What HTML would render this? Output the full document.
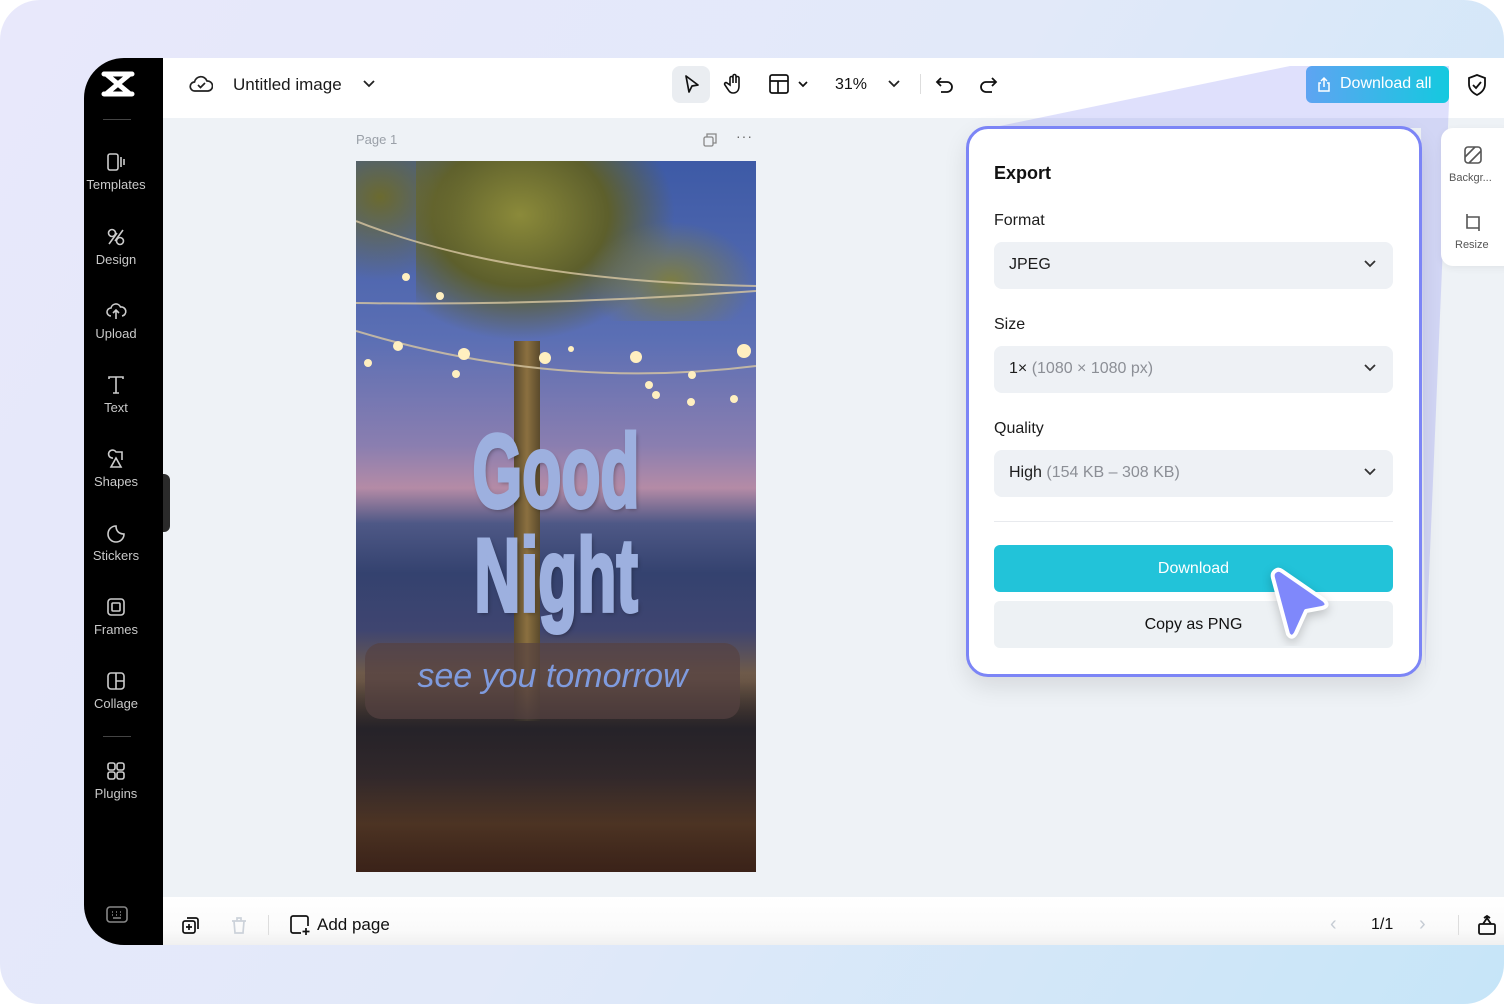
<!DOCTYPE html>
<html><head><meta charset="utf-8"><style>
*{margin:0;padding:0;box-sizing:border-box}
html,body{width:1504px;height:1004px;overflow:hidden;background:#fff;font-family:"Liberation Sans",sans-serif}
#bg{position:absolute;left:0;top:0;width:1504px;height:1004px;border-radius:40px;background:linear-gradient(120deg,#e8e8fb 0%,#e2e9f9 50%,#c6e5f8 100%);overflow:hidden}
.abs{position:absolute}
#side{left:84px;top:58px;width:79px;height:887px;background:#000;border-radius:40px 0 0 40px}
.si{position:absolute;left:0;width:64px;text-align:center;color:#c9c9c9;font-size:13px}
.si svg{display:block;margin:0 auto 4px}
#top{left:163px;top:58px;width:1341px;height:60px;background:#fff}
#canvas{left:163px;top:118px;width:1341px;height:779px;background:#eef2f6}
#bot{left:163px;top:897px;width:1341px;height:48px;background:linear-gradient(#fff,#fafafa 70%,#f0f0f0)}
.lbl{position:absolute;left:994px;font-size:16px;color:#1c1c1c}
.sel{position:absolute;left:994px;width:399px;height:47px;background:#eef1f5;border-radius:8px;font-size:16px;color:#1c1c1c;padding:14px 15px}
.sel span{color:#8c8f96}
.sel svg{position:absolute;right:16px;top:17px}
</style></head><body>
<div id="bg">
<div class="abs" id="top"></div>
<div class="abs" id="canvas"></div>
<div class="abs" id="bot"></div>
<div class="abs" id="side">
 <svg class="abs" style="left:17px;top:12px" width="34" height="28" viewBox="0 0 34 28"><path d="M3 4h28M3 24h28M5 4l24 20M29 4L5 24" stroke="#fff" stroke-width="5" fill="none" stroke-linecap="round"/></svg>
 <div class="abs" style="left:19px;top:61px;width:28px;height:1px;background:#444"></div>
 <div class="si" style="top:93px"><svg width="22" height="22" viewBox="0 0 22 22" fill="none" stroke="#ccc" stroke-width="1.6"><rect x="3" y="3" width="10" height="16" rx="2"/><path d="M16 6v10M19 8v6"/></svg>Templates</div>
 <div class="si" style="top:168px"><svg width="22" height="22" viewBox="0 0 22 22" fill="none" stroke="#ccc" stroke-width="1.6"><circle cx="7" cy="7" r="3.5"/><circle cx="15" cy="15" r="3.5"/><path d="M10 15l8-11M4 18l8-11"/></svg>Design</div>
 <div class="si" style="top:242px"><svg width="22" height="22" viewBox="0 0 22 22" fill="none" stroke="#ccc" stroke-width="1.6"><path d="M6 16a4 4 0 010-8 5 5 0 019.5-1A4 4 0 0117 16M11 19v-8M8 13l3-3 3 3"/></svg>Upload</div>
 <div class="si" style="top:316px"><svg width="22" height="22" viewBox="0 0 22 22" fill="none" stroke="#ccc" stroke-width="1.6"><path d="M4 5V3h14v2M11 3v16M8 19h6"/></svg>Text</div>
 <div class="si" style="top:390px"><svg width="22" height="22" viewBox="0 0 22 22" fill="none" stroke="#ccc" stroke-width="1.6"><path d="M8 10a4 4 0 113-6h6v8M11 10l-5 9h10z"/></svg>Shapes</div>
 <div class="si" style="top:464px"><svg width="22" height="22" viewBox="0 0 22 22" fill="none" stroke="#ccc" stroke-width="1.6"><path d="M19 12a8 8 0 11-8-8c0 5 3 8 8 8z"/></svg>Stickers</div>
 <div class="si" style="top:538px"><svg width="22" height="22" viewBox="0 0 22 22" fill="none" stroke="#ccc" stroke-width="1.6"><rect x="3" y="3" width="16" height="16" rx="3"/><rect x="7" y="7" width="8" height="8" rx="1"/></svg>Frames</div>
 <div class="si" style="top:612px"><svg width="22" height="22" viewBox="0 0 22 22" fill="none" stroke="#ccc" stroke-width="1.6"><rect x="3" y="3" width="16" height="16" rx="3"/><path d="M11 3v16M11 11h8"/></svg>Collage</div>
 <div class="abs" style="left:19px;top:678px;width:28px;height:1px;background:#444"></div>
 <div class="si" style="top:702px"><svg width="22" height="22" viewBox="0 0 22 22" fill="none" stroke="#ccc" stroke-width="1.6"><rect x="3" y="3" width="7" height="7" rx="2"/><rect x="12" y="3" width="7" height="7" rx="2"/><rect x="3" y="12" width="7" height="7" rx="2"/><rect x="12" y="12" width="7" height="7" rx="2"/></svg>Plugins</div>
 <svg class="abs" style="left:22px;top:848px" width="22" height="18" viewBox="0 0 22 18" fill="none" stroke="#888" stroke-width="1.6"><rect x="1" y="1" width="20" height="15" rx="3"/><path d="M6 6h1M10 6h1M14 6h1M6 9h1M10 9h1M14 9h1M7 12h8"/></svg>
</div>
<div class="abs" style="left:163px;top:474px;width:7px;height:58px;background:#2a2a2a;border-radius:0 6px 6px 0"></div>
<!-- top bar content -->
<svg class="abs" style="left:189px;top:73px" width="24" height="22" viewBox="0 0 24 22" fill="none" stroke="#222" stroke-width="1.7"><path d="M6 18a4.5 4.5 0 01-.5-9A6.5 6.5 0 0118 8a5 5 0 011 10z"/><path d="M9 12l2.5 2.5L16 10"/></svg>
<div class="abs" style="left:233px;top:75px;font-size:17px;color:#1a1a1a">Untitled image</div>
<svg class="abs" style="left:362px;top:79px" width="14" height="10" viewBox="0 0 14 10"><path d="M2 2l5 5 5-5" stroke="#222" stroke-width="1.8" fill="none"/></svg>
<div class="abs" style="left:672px;top:66px;width:38px;height:37px;background:#eaedf1;border-radius:8px"></div>
<svg class="abs" style="left:680px;top:73px" width="22" height="22" viewBox="0 0 22 22"><path d="M6 3l12 9-6 1-3 6z" stroke="#111" stroke-width="1.7" fill="none" stroke-linejoin="round"/></svg>
<svg class="abs" style="left:722px;top:72px" width="24" height="24" viewBox="0 0 24 24" fill="none" stroke="#111" stroke-width="1.6"><path d="M8 13V6a1.5 1.5 0 013 0v5V4a1.5 1.5 0 013 0v7V6a1.5 1.5 0 013 0v8c0 4-2 7-6 7-3 0-4-2-6-5l-2-3a1.4 1.4 0 012-2z"/></svg>
<svg class="abs" style="left:769px;top:74px" width="44" height="20" viewBox="0 0 44 20" fill="none" stroke="#111" stroke-width="1.7"><rect x="1" y="1" width="18" height="18" rx="2"/><path d="M1 7h18M9 7v12M30 8l4 4 4-4"/></svg>
<div class="abs" style="left:835px;top:76px;font-size:16px;color:#111">31%</div>
<svg class="abs" style="left:887px;top:79px" width="14" height="10" viewBox="0 0 14 10"><path d="M2 2l5 5 5-5" stroke="#222" stroke-width="1.8" fill="none"/></svg>
<div class="abs" style="left:920px;top:74px;width:1px;height:20px;background:#ddd"></div>
<svg class="abs" style="left:934px;top:74px" width="22" height="22" viewBox="0 0 22 22" fill="none" stroke="#111" stroke-width="1.8"><path d="M7 4L3 8l4 4M3 8h10a5 5 0 010 10H7"/></svg>
<svg class="abs" style="left:977px;top:74px" width="22" height="22" viewBox="0 0 22 22" fill="none" stroke="#111" stroke-width="1.8"><path d="M15 4l4 4-4 4M19 8H9a5 5 0 000 10h6"/></svg>
<!-- beam -->
<svg class="abs" style="left:0;top:0" width="1504" height="1004"><polygon points="990,128 1290,66 1449,66 1449,103 1425,670 1421,128" fill="#8b8ef5" opacity="0.28"/></svg>
<div class="abs" style="left:1306px;top:66px;width:143px;height:37px;border-radius:6px;background:linear-gradient(90deg,#5ea4f2,#14c9df);color:#fff;font-size:16px;padding:9px 0 0 34px">Download all</div>
<svg class="abs" style="left:1316px;top:76px" width="16" height="17" viewBox="0 0 16 17" fill="none" stroke="#fff" stroke-width="1.5"><path d="M5 7H3v8h10V7h-2M8 11V2M5 5l3-3 3 3"/></svg>
<svg class="abs" style="left:1466px;top:73px" width="22" height="24" viewBox="0 0 22 24" fill="none" stroke="#111" stroke-width="1.8"><path d="M11 2l8 3v6c0 6-4 9-8 11-4-2-8-5-8-11V5z"/><path d="M7 12l3 3 5-6"/></svg>
<!-- right panel -->
<div class="abs" style="left:1441px;top:128px;width:70px;height:138px;background:#fff;border-radius:12px 0 0 12px;box-shadow:0 2px 8px rgba(0,0,0,.06)"></div>
<svg class="abs" style="left:1463px;top:145px" width="20" height="20" viewBox="0 0 20 20" fill="none" stroke="#555" stroke-width="1.6"><rect x="2" y="2" width="16" height="16" rx="3"/><path d="M2 12L12 2M6 18L18 6"/></svg>
<div class="abs" style="left:1449px;top:172px;font-size:11px;color:#555">Backgr...</div>
<svg class="abs" style="left:1463px;top:212px" width="20" height="20" viewBox="0 0 20 20" fill="none" stroke="#555" stroke-width="1.6"><path d="M4 5h12v11H4zM4 2v3M16 16v3"/></svg>
<div class="abs" style="left:1455px;top:239px;font-size:11px;color:#555">Resize</div>
<!-- page -->
<div class="abs" style="left:356px;top:132px;font-size:13px;color:#9aa0a8">Page 1</div>
<svg class="abs" style="left:702px;top:132px" width="16" height="16" viewBox="0 0 16 16" fill="none" stroke="#888" stroke-width="1.3"><rect x="2" y="5" width="9" height="9" rx="1.5"/><path d="M5 5V2h9v9h-3"/></svg>
<div class="abs" style="left:736px;top:128px;font-size:14px;color:#666;letter-spacing:1px">···</div>
<div class="abs" style="left:356px;top:161px;width:400px;height:711px;overflow:hidden;background:linear-gradient(180deg,#3d5aa6 0%,#5b6fb4 25%,#8a7eb0 40%,#b48ba6 46%,#4e5886 51%,#34426f 58%,#3f4570 66%,#6e5a4a 72%,#4a3626 82%,#2e1e16 100%)">
 <div class="abs" style="left:60px;top:0;width:260px;height:180px;background:radial-gradient(ellipse at 40% 30%,#8b8a3a 0%,#5d5f2c 40%,rgba(60,60,40,0) 70%)"></div>
 <div class="abs" style="left:230px;top:60px;width:170px;height:100px;background:radial-gradient(ellipse at 50% 60%,#7c7d44 0%,rgba(80,80,50,0) 70%)"></div>
 <div class="abs" style="left:0;top:0;width:120px;height:120px;background:radial-gradient(ellipse at 20% 30%,#6b6a2f 0%,rgba(70,70,40,0) 70%)"></div>
 <div class="abs" style="left:158px;top:180px;width:26px;height:380px;background:linear-gradient(90deg,#5a4a2c,#8b7040,#5a4a2c)"></div>
 <svg class="abs" style="left:0;top:0" width="400" height="400"><g fill="none" stroke="#d8c7a2" stroke-width="2" opacity=".8"><path d="M0 60Q150 120 400 125"/><path d="M0 142Q200 145 400 130"/><path d="M0 170Q200 230 400 205"/></g><g fill="#ffefc0"><circle cx="42" cy="185" r="5"/><circle cx="108" cy="193" r="6"/><circle cx="50" cy="116" r="4"/><circle cx="84" cy="135" r="4"/><circle cx="189" cy="197" r="6"/><circle cx="280" cy="196" r="6"/><circle cx="388" cy="190" r="7"/><circle cx="12" cy="202" r="4"/><circle cx="100" cy="213" r="4"/><circle cx="215" cy="188" r="3"/><circle cx="336" cy="214" r="4"/><circle cx="293" cy="224" r="4"/><circle cx="300" cy="234" r="4"/><circle cx="378" cy="238" r="4"/><circle cx="335" cy="241" r="4"/></g></svg>
 <div class="abs" style="left:0;top:520px;width:400px;height:191px;background:linear-gradient(180deg,rgba(30,30,40,0) 0%,rgba(30,30,40,.85) 25%,rgba(45,38,45,.8) 50%,rgba(90,60,40,.6) 75%,rgba(60,35,25,.9) 100%)"></div>
 <div class="abs" style="left:0;top:259px;width:400px;text-align:center;font-weight:bold;font-size:80px;line-height:80px;color:#9db0df;-webkit-text-stroke:3px #9db0df;transform:scale(0.8,1.3);transform-origin:50% 0;text-shadow:2px 2px 4px rgba(0,0,0,.35)">Good<br>Night</div>
 <div class="abs" style="left:9px;top:482px;width:375px;height:76px;background:rgba(85,65,65,.7);border-radius:16px"></div>
 <div class="abs" style="left:9px;top:496px;width:375px;text-align:center;font-size:34px;font-style:italic;color:#7f9bde">see you tomorrow</div>
</div>
<!-- bottom bar -->
<svg class="abs" style="left:181px;top:915px" width="20" height="20" viewBox="0 0 20 20" fill="none" stroke="#111" stroke-width="1.7"><rect x="2" y="6" width="12" height="12" rx="2"/><path d="M6 3h9a2 2 0 012 2v9M8 9v6M5 12h6"/></svg>
<svg class="abs" style="left:229px;top:915px" width="20" height="20" viewBox="0 0 20 20" fill="none" stroke="#ccd2da" stroke-width="1.7"><path d="M3 6h14M8 6V3h4v3M5 6l1 12h8l1-12"/></svg>
<div class="abs" style="left:268px;top:915px;width:1px;height:20px;background:#ddd"></div>
<svg class="abs" style="left:289px;top:914px" width="22" height="22" viewBox="0 0 22 22" fill="none" stroke="#111" stroke-width="1.7"><path d="M12 19H4a2 2 0 01-2-2V4a2 2 0 012-2h13a2 2 0 012 2v8M17 14v7M13.5 17.5h7"/></svg>
<div class="abs" style="left:317px;top:915px;font-size:17px;color:#111">Add page</div>
<div class="abs" style="left:1330px;top:913px;font-size:20px;color:#c6ccd4">‹</div>
<div class="abs" style="left:1371px;top:916px;font-size:16px;color:#111">1/1</div>
<div class="abs" style="left:1419px;top:913px;font-size:20px;color:#c6ccd4">›</div>
<div class="abs" style="left:1458px;top:915px;width:1px;height:20px;background:#ddd"></div>
<svg class="abs" style="left:1477px;top:914px" width="20" height="22" viewBox="0 0 20 22" fill="none" stroke="#111" stroke-width="1.8"><rect x="2" y="10" width="16" height="10" rx="1.5"/><path d="M6 10l4-6 4 6M7 4l3-2 3 2"/></svg>
<!-- popup -->
<div class="abs" style="left:966px;top:126px;width:456px;height:551px;background:#fff;border:3px solid #7c85f6;border-radius:22px;box-shadow:0 10px 24px rgba(0,0,0,.1)"></div>
<div class="abs" style="left:994px;top:163px;font-size:18px;font-weight:bold;color:#111">Export</div>
<div class="lbl" style="top:212px">Format</div>
<div class="sel" style="top:242px">JPEG<svg width="14" height="10" viewBox="0 0 14 10"><path d="M2 2l5 5 5-5" stroke="#333" stroke-width="1.8" fill="none"/></svg></div>
<div class="lbl" style="top:316px">Size</div>
<div class="sel" style="top:346px">1× <span>(1080 × 1080 px)</span><svg width="14" height="10" viewBox="0 0 14 10"><path d="M2 2l5 5 5-5" stroke="#333" stroke-width="1.8" fill="none"/></svg></div>
<div class="lbl" style="top:420px">Quality</div>
<div class="sel" style="top:450px">High <span>(154 KB – 308 KB)</span><svg width="14" height="10" viewBox="0 0 14 10"><path d="M2 2l5 5 5-5" stroke="#333" stroke-width="1.8" fill="none"/></svg></div>
<div class="abs" style="left:994px;top:521px;width:399px;height:1px;background:#e8eaee"></div>
<div class="abs" style="left:994px;top:545px;width:399px;height:47px;background:#22c3d9;border-radius:6px;color:#fff;font-size:16px;text-align:center;line-height:47px">Download</div>
<div class="abs" style="left:994px;top:601px;width:399px;height:47px;background:#edf1f4;border-radius:6px;color:#111;font-size:16px;text-align:center;line-height:47px">Copy as PNG</div>
<svg class="abs" style="left:1262px;top:562px" width="80" height="84" viewBox="0 0 80 84"><path d="M12 10Q16 6 20 9L62 38Q68 44 60 46L44 49 34 71Q30 78 26 72L11 16Q10 12 12 10z" fill="#7f88fb" stroke="#fff" stroke-width="4" stroke-linejoin="round" style="filter:drop-shadow(0 4px 5px rgba(0,0,0,.2))"/></svg>
</div>
</body></html>
